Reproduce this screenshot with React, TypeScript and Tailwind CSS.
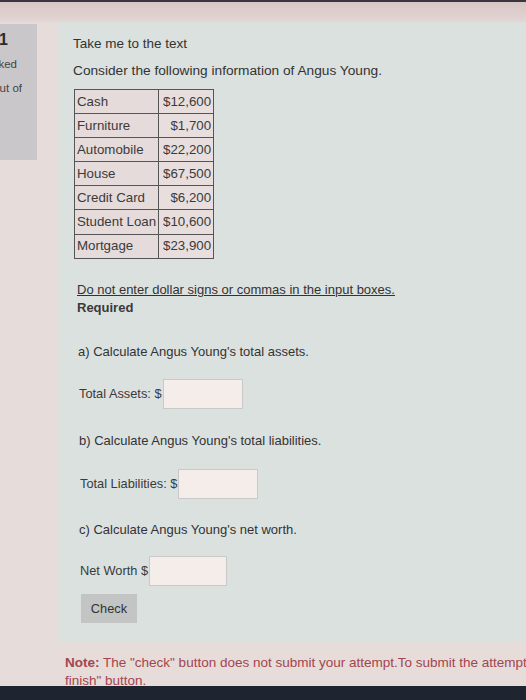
import React from "react";

const rows: [string, string][] = [
  ["Cash", "$12,600"],
  ["Furniture", "$1,700"],
  ["Automobile", "$22,200"],
  ["House", "$67,500"],
  ["Credit Card", "$6,200"],
  ["Student Loan", "$10,600"],
  ["Mortgage", "$23,900"],
];

function Field({ label, inputW }: { label: string; inputW: string }) {
  return (
    <div className="flex items-center">
      <span className="text-[12.8px] text-[#3a3a3a] mr-[1px]">{label}</span>
      <div className={`h-[30px] ${inputW} bg-[#f4ede9] border border-[#c9c9c9]`} />
    </div>
  );
}

export default function App() {
  return (
    <div
      className="w-[526px] h-[700px] overflow-hidden flex flex-col bg-[#e6dcd9] text-[#333]"
      style={{ fontFamily: '"Liberation Sans", Arial, sans-serif' }}
    >
      <div className="h-[2px] bg-[#3a3540]" />
      <div className="h-[20px] bg-gradient-to-b from-[#d8c6c5] to-[#e3d6d4]" />
      <div className="flex">
        <div className="w-[37px] h-[136px] mt-[2px] bg-[#cac7ca] overflow-hidden flex flex-col items-end pt-[6px]">
          <div className="whitespace-nowrap font-bold text-[16px] leading-[20px] mr-[29px] text-[#2a2a2a]">Question 1</div>
          <div className="whitespace-nowrap text-[11.5px] leading-[16px] mt-[6px] mr-[20px] text-[#444]">Marked</div>
          <div className="whitespace-nowrap text-[11.5px] leading-[16px] mt-[8px] mr-[15px] text-[#444]">Points out of</div>
        </div>
        <div className="ml-[20px] flex-1 bg-[#dbe1df] pl-[16px] pt-[12px] pb-[18px] h-[620px]">
          <div className="text-[13.5px] leading-[20px] text-[#333]">Take me to the text</div>
          <div className="text-[13.7px] leading-[20px] mt-[7px] text-[#333]">
            Consider the following information of Angus Young.
          </div>
          <table className="mt-[8px] ml-[1px] border-collapse text-[13.3px] text-[#3a3a3a]">
            <tbody>
              {rows.map(([k, v]) => (
                <tr key={k} className="h-[24.1px]">
                  <td className="border border-[#555] bg-[#e6dbdb] px-[2px] w-[83px] whitespace-nowrap">{k}</td>
                  <td className="border border-[#555] bg-[#e8dede] px-[2px] w-[55px] text-right whitespace-nowrap">{v}</td>
                </tr>
              ))}
            </tbody>
          </table>
          <div className="pl-[4px]">
            <div className="mt-[22px] text-[13px] leading-[18px] underline text-[#333]">
              Do not enter dollar signs or commas in the input boxes.
            </div>
            <div className="text-[13px] leading-[18px] font-bold text-[#3a3a3a]">Required</div>
            <div className="pl-[1px]">
              <div className="mt-[26px] text-[13px] leading-[18px]">a) Calculate Angus Young's total assets.</div>
              <div className="mt-[18px] pl-[1px]">
                <Field label="Total Assets: $" inputW="w-[80px]" />
              </div>
              <div className="mt-[23px] text-[13px] leading-[18px] pl-[1px]">b) Calculate Angus Young's total liabilities.</div>
              <div className="mt-[19px] pl-[2px]">
                <Field label="Total Liabilities: $" inputW="w-[80px]" />
              </div>
              <div className="mt-[22px] text-[13px] leading-[18px] pl-[1px]">c) Calculate Angus Young's net worth.</div>
              <div className="mt-[17px] pl-[2px]">
                <Field label="Net Worth $" inputW="w-[78px]" />
              </div>
              <button className="mt-[8px] ml-[3px] h-[29px] w-[56px] bg-[#c2c5c4] text-[12.8px] text-[#333]">
                Check
              </button>
            </div>
          </div>
        </div>
      </div>
      <div className="h-[44px] overflow-hidden pl-[65px] pt-[12px] text-[13.5px] leading-[18px] text-[#a3454f] whitespace-nowrap">
        <div>
          <span className="font-bold">Note:</span> The "check" button does not submit your attempt.To submit the attempt, go to the "Save and
        </div>
        <div>finish" button.</div>
      </div>
      <div className="flex-1 bg-[#1f2530]" />
    </div>
  );
}
